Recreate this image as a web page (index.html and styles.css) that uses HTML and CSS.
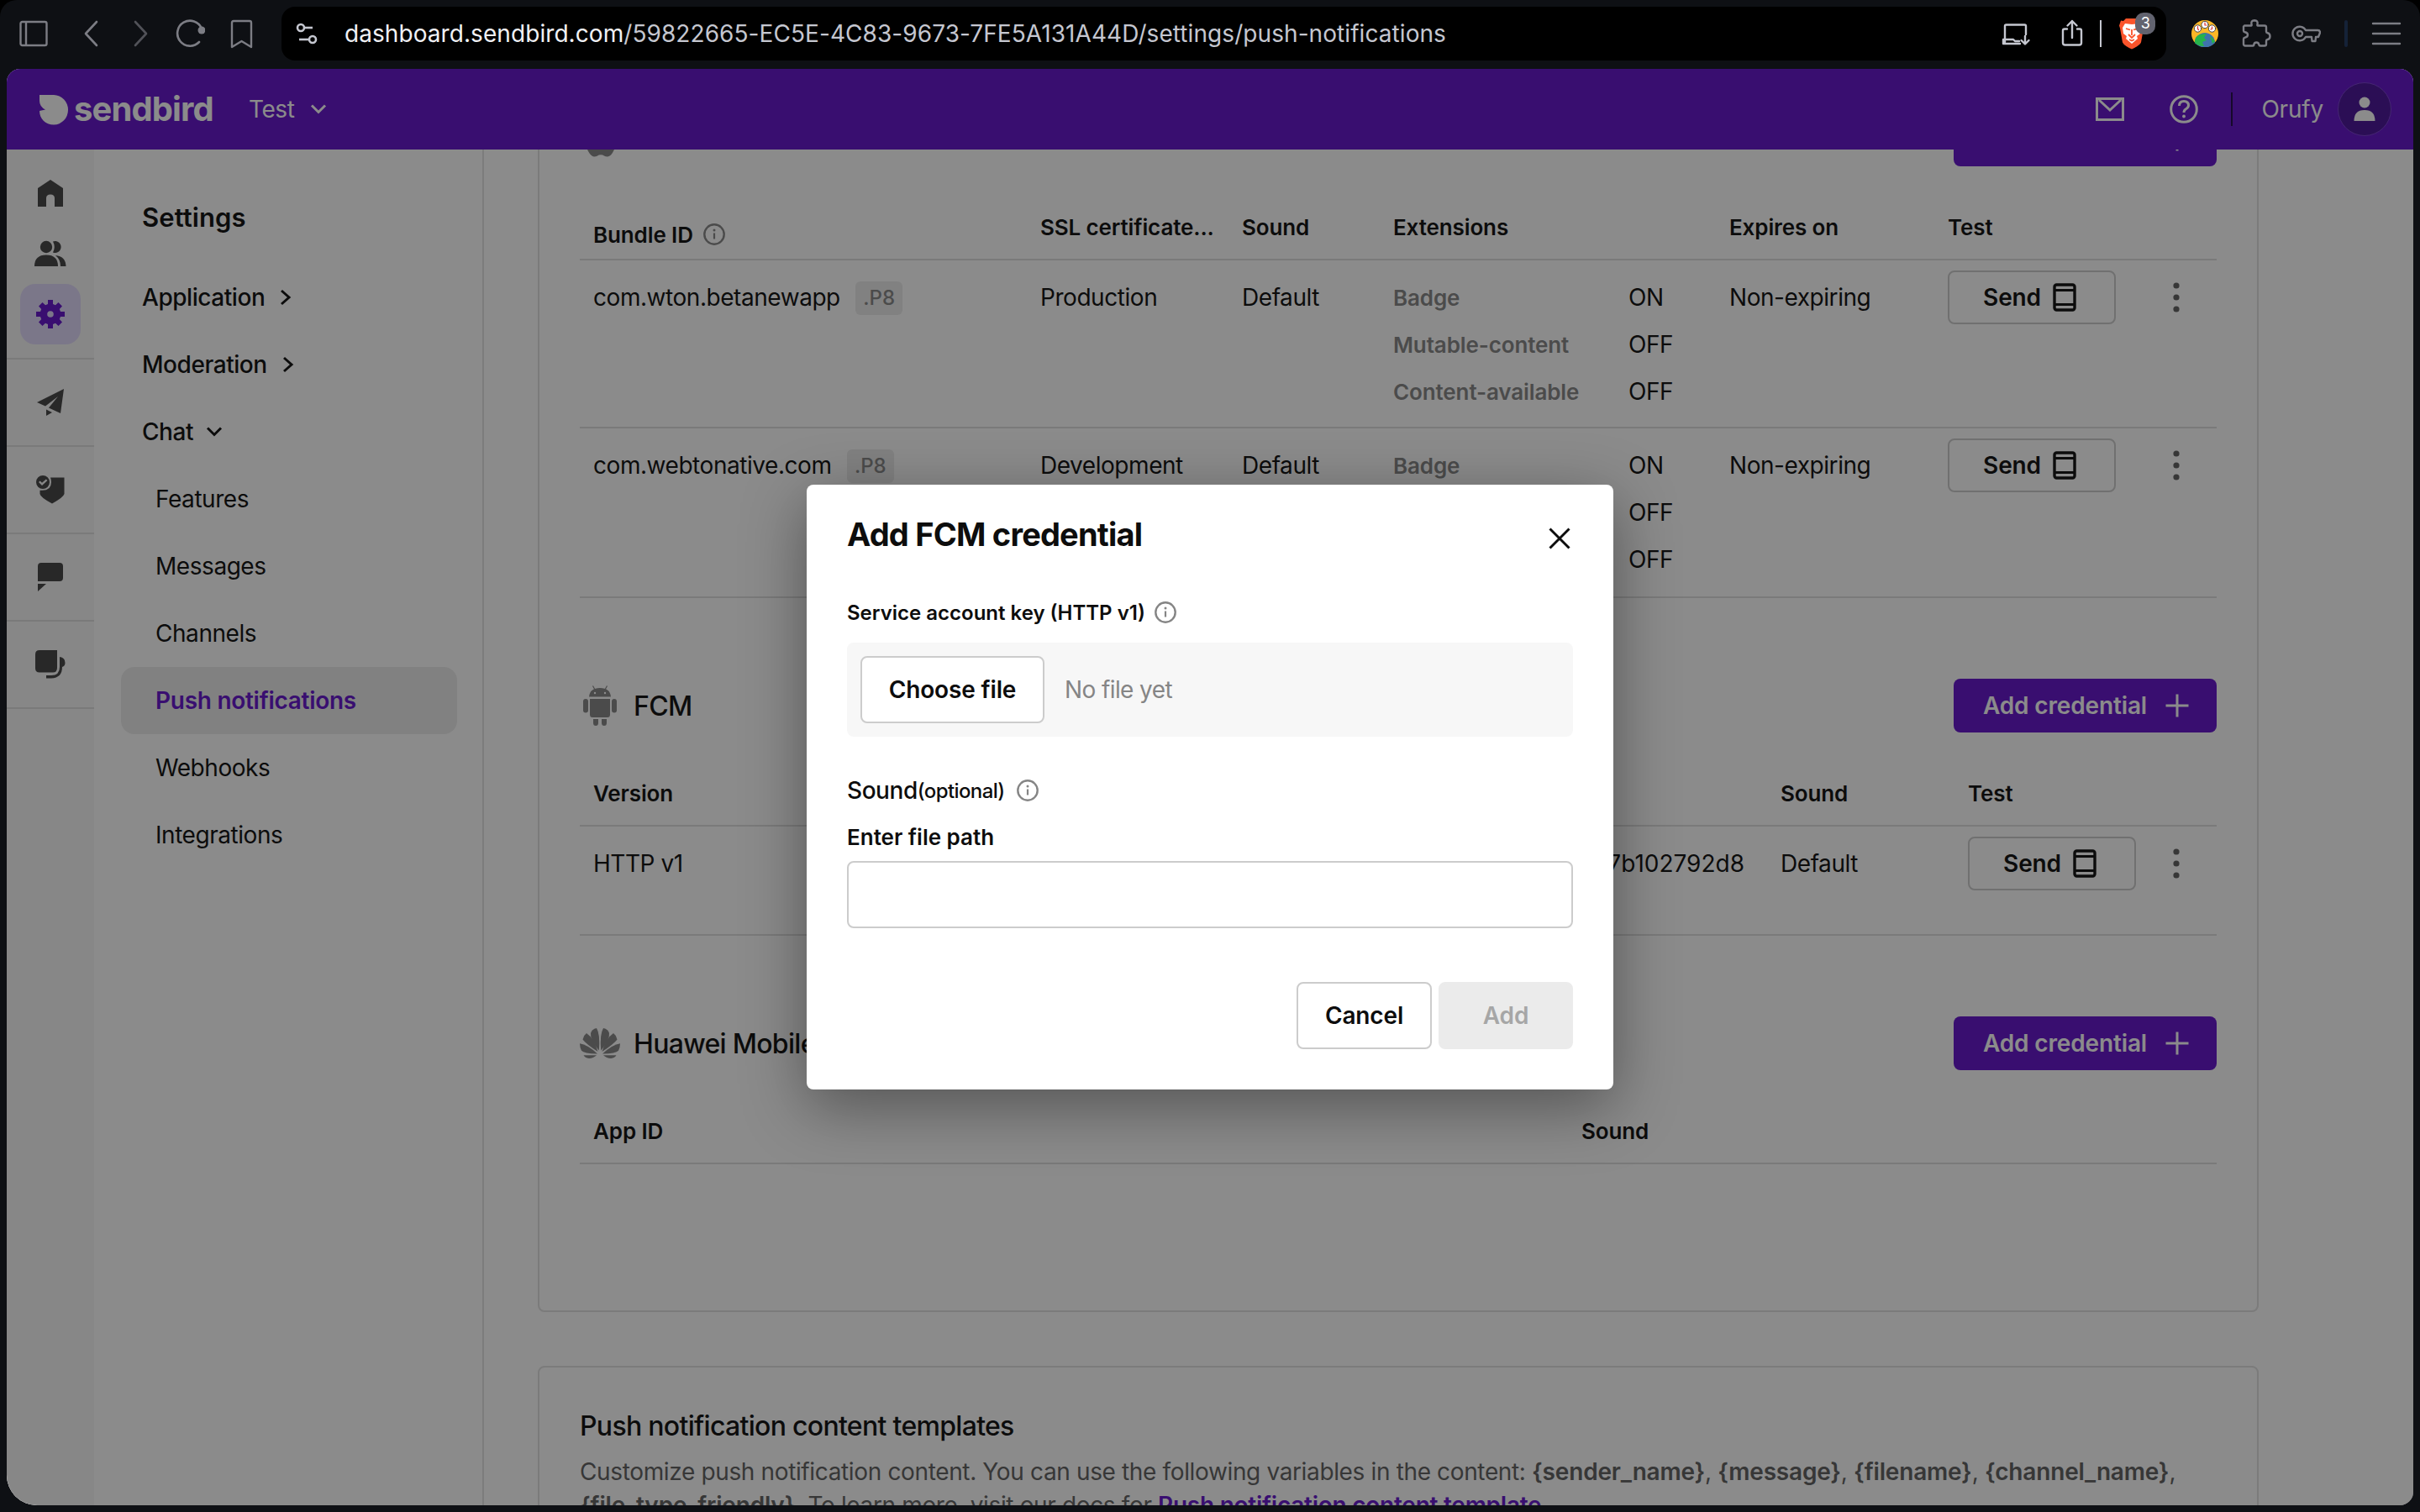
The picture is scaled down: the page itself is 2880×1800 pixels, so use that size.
FILE: index.html
```html
<!DOCTYPE html>
<html lang="en">
<head>
  <meta charset="UTF-8" />
  <title>Push notifications - Sendbird Dashboard</title>
  <link rel="stylesheet" href="styles.css">
</head>
<body>
  <svg class="defs" width="0" height="0">
    <symbol id="info" viewBox="0 0 26 26"><circle cx="13" cy="13" r="11.7" fill="none" stroke="currentColor" stroke-width="2.4"/><path d="M13 11.5v7" stroke="currentColor" stroke-width="2.2"/><circle cx="13" cy="8" r="1.5" fill="currentColor"/></symbol>
    <symbol id="phone" viewBox="0 0 28 34"><rect x="2" y="2" width="24" height="30" rx="2.5" fill="none" stroke="currentColor" stroke-width="3.4"/><path d="M2 8.5h24M2 25.500h24" stroke="currentColor" stroke-width="3"/></symbol>
    <symbol id="kebab" viewBox="0 0 8 36"><circle cx="4" cy="4" r="3.6"/><circle cx="4" cy="18" r="3.6"/><circle cx="4" cy="32" r="3.6"/></symbol>
    <symbol id="plus" viewBox="0 0 28 28"><path d="M14 0.500v27M0.500 14h27" stroke="currentColor" stroke-width="3"/></symbol>
    <symbol id="chev-right" viewBox="0 0 14 20"><path d="M2 2l9 8-9 8" fill="none" stroke="currentColor" stroke-width="3"/></symbol>
    <symbol id="chev-down" viewBox="0 0 20 14"><path d="M2 2.500l8 8 8-8" fill="none" stroke="currentColor" stroke-width="3"/></symbol>
  </svg>

  <div class="browser">
    <div class="toolbar">
      <div class="nav-icons">
        <svg width="36" height="36" viewBox="0 0 36 36"><rect x="2.500" y="4" width="31" height="28" rx="2"/><path d="M9 4.500v27"/></svg>
        <svg width="36" height="36" viewBox="0 0 36 36"><path d="M25 4L12 18l13 14" stroke-width="2.6"/></svg>
        <svg class="dim" width="36" height="36" viewBox="0 0 36 36"><path d="M11 4l13 14-13 14" stroke-width="2.6"/></svg>
        <svg width="36" height="36" viewBox="0 0 36 36"><path d="M29 28A15 15 0 1 1 32 12" stroke-width="2.6"/><circle cx="32" cy="14" r="4.500" fill="currentColor" stroke="none"/></svg>
        <svg width="36" height="36" viewBox="0 0 36 36"><path d="M7 5q0-2 2-2h19q2 0 2 2v29l-11.500-7L7 34z"/></svg>
      </div>
      <div class="urlbar">
        <svg class="site" width="32" height="28" viewBox="0 0 32 28"><g fill="none" stroke="currentColor" stroke-width="2.600"><circle cx="9" cy="7" r="4"/><path d="M13 7h10"/><circle cx="23" cy="21" r="4"/><path d="M19 21H7"/></g></svg>
        <div class="url"><b>dashboard.sendbird.com</b>/59822665-EC5E-4C83-9673-7FE5A131A44D/settings/push-notifications</div>
        <div class="url-icons">
          <svg width="36" height="36" viewBox="0 0 36 36"><path d="M5 28V9q0-1.500 1.500-1.500h22Q30 7.500 30 9v10M3 25h12l2 2h5M3 25v5h20M29 21v9M24.500 26l4.500 4.500 4.500-4.500"/></svg>
          <svg width="36" height="36" viewBox="0 0 36 36"><path d="M12 12.500H9q-2 0-2 2V29q0 2.500 2.500 2.500h17Q29 31.500 29 29V14.500q0-2-2-2h-3M18 23V3M12.500 8.500L18 3l5.500 5.500"/></svg>
          <span class="sep"></span>
          <div class="brave">
            <svg width="32" height="38" viewBox="0 0 32 38"><path d="M9 1h14l3 3 3-.500 2 6-1 3-3 17q-2 4-11 8-9-4-11-8L2 12.500l-1-3 2-6L6 4z" fill="#fb542b"/><path d="M8 7l8 1 8-1 3 5-1 7-4 3 1 3-7 6-7-6 1-3-4-3-1-7z" fill="#fff"/><path d="M9 13l5 1.500M23 13l-5 1.500M16 14v7M12 20l4 4 4-4M13 26l3 1.500 3-1.500" stroke="#fb542b" stroke-width="1.800" fill="none"/></svg>
            <span class="count">3</span>
          </div>
        </div>
      </div>
      <div class="ext-icons">
        <svg class="globe" width="32" height="32" viewBox="0 0 32 32"><circle cx="16" cy="16" r="16" fill="#fdb827"/><path d="M4 27a12 12 0 0 1 24 0A16 16 0 0 1 4 27z" fill="#3f73ad"/><path d="M4 27q-1-7 6-10l8-1-3 5 3 3-5 2 2 5Q8 31 4 27zM22 18l6 7-3 3z" fill="#26b34b"/><g fill="#fff" stroke="#444" stroke-width="1"><circle cx="7.500" cy="10" r="4.200"/><circle cx="16" cy="5.500" r="4.200"/><circle cx="24.500" cy="10" r="4.200"/></g><path d="M7.500 7.500v3l1 1M16 3v3h2M24.500 8v2.500l-1.500.500" stroke="#d33" stroke-width="1.200" fill="none"/></svg>
        <svg width="36" height="36" viewBox="0 0 36 36"><path d="M4 8.500h8q1 0 .500-1.500Q11.500 2.500 16 2.300q4.500.200 3.500 4.700-.500 1.500.500 1.500h8q2 0 2 2v5q0 1.500 1.500 1.700 3 .500 3 4 0 3.300-3 3.800-1.500.200-1.500 1.700v3.800q0 2-2 2h-5q-1.500 0-1.700-1.500-.500-2.500-3-2.500t-3 2.500Q15.500 32.500 14 32.500H5q-2 0-2-2v-6q0-1.500 1.500-1.700 3.500-.700 3.500-3.300t-3.500-3.300Q3 16 3 14.500v-5z"/></svg>
        <svg width="36" height="36" viewBox="0 0 36 36"><path d="M18 14a8.300 8.300 0 1 0 0 8h7l.500 5h4l.500-5h3l2-5q0-3-2.500-3z"/><circle cx="11" cy="18" r="3"/></svg>
        <span class="ext-sep"></span>
        <svg width="36" height="36" viewBox="0 0 36 36"><path d="M2 6h32M2 18h32M2 30h32"/></svg>
      </div>
    </div>

    <div class="page">
      <header class="topbar">
        <svg class="bird" width="36" height="37" viewBox="0 0 36 37"><path d="M1 1h17a17.500 17.500 0 0 1 17 18 17 17.500 0 0 1-17 17.500C8 36.500 1 29 1 20l7-1.500Q1 15 1 8z" fill="currentColor"/></svg>
        <span class="brand">sendbird</span>
        <span class="app">Test</span>
        <svg width="20" height="14"><use href="#chev-down"/></svg>
        <div class="account">
          <svg width="34" height="28" viewBox="0 0 34 28" fill="none" stroke="currentColor" stroke-width="3"><rect x="1.500" y="1.500" width="31" height="25"/><path d="M4 3l13 12L30 3"/></svg>
          <svg class="help" width="36" height="36" viewBox="0 0 36 36" fill="none" stroke="currentColor" stroke-width="3"><circle cx="18" cy="18" r="15.300"/><path d="M12.500 14q0-5.500 5.500-5.500t5.500 5q0 2.500-3 4.200-2.500 1.500-2.500 4.300"/><circle cx="18" cy="26.500" r="1.900" fill="currentColor" stroke="none"/></svg>
          <span class="line"></span>
          <span class="user">Orufy</span>
          <span class="avatar"><svg width="26" height="30" viewBox="0 0 26 30" fill="currentColor"><circle cx="13" cy="7" r="6.500"/><path d="M0.500 29q0-13 12.500-13t12.500 13z"/></svg></span>
        </div>
      </header>

      <div class="body">
        <nav class="rail">
          <div class="rail-top">
            <a><svg width="30" height="34" viewBox="0 0 30 34"><path d="M0 11L15 1l15 10v22H20V23q0-4.500-5-4.500T10 23v10H0z"/></svg></a>
            <a><svg width="38" height="32" viewBox="0 0 38 32"><circle cx="14" cy="8" r="7.200"/><path d="M0 31q0-13.500 14-13.500T28 31z"/><path d="M22 1.500a7 7 0 1 1 0 13q3.500-6.500 0-13zM25 18q12 1 12.500 13H31q0-8-6-13z"/></svg></a>
            <a class="on"><svg width="34" height="34" viewBox="0 0 34 34"><path fill-rule="evenodd" d="M14 0h6v5l3 1.200L26.500 3 31 7.500 27.800 11l1.200 3h5v6h-5l-1.200 3 3.200 3.500-4.500 4.500-3.500-3.200-3 1.200v5h-6v-5l-3-1.200L7.500 31 3 26.500 6.200 23 5 20H0v-6h5l1.200-3L3 7.500 7.500 3 11 6.200 14 5zM17 13.200a3.800 3.800 0 1 0 0 7.600 3.800 3.800 0 0 0 0-7.600z"/></svg></a>
          </div>
          <a class="cell"><svg width="32" height="32" viewBox="0 0 32 32"><path d="M0 16L32 0l-4 29-14-6.500L25 9 10 20.500zM11 24.500l7 3.500-7 4z"/></svg></a>
          <a class="cell"><svg width="34" height="34" viewBox="0 0 34 34"><path fill-rule="evenodd" d="M8 0a8 8 0 1 1 0 16A8 8 0 0 1 8 0zm-5 8l4 4 6.500-6-1.700-1.600L7 8.800 4.700 6.500z"/><path d="M17 2.500h16.500V22q-1 4-14.500 11.500Q5 26 4.500 22v-4.300Q18 19 18 8q0-3-1-5.500z"/></svg></a>
          <a class="cell"><svg width="30" height="34" viewBox="0 0 30 34"><path d="M4 0h22q4 0 4 4v14q0 4-4 4H0V4q0-4 4-4zM0 25h10l-10 9z"/></svg></a>
          <a class="cell"><svg width="36" height="34" viewBox="0 0 36 34"><path d="M5 0h21v21q0 5.500-5 5.500H5q-5 0-5-5V5q0-5 5-5zM29 8q6.500 1 6.500 7 0 4-3.500 5 0 13-13 13.500h-6V30h6q10 0 10-10z"/></svg></a>
        </nav>

        <aside class="sidebar">
          <h2>Settings</h2>
          <a class="group">Application <svg width="14" height="20"><use href="#chev-right"/></svg></a>
          <a class="group">Moderation <svg width="14" height="20"><use href="#chev-right"/></svg></a>
          <a class="group open">Chat <svg width="20" height="14"><use href="#chev-down"/></svg></a>
          <a>Features</a>
          <a>Messages</a>
          <a>Channels</a>
          <a class="active">Push notifications</a>
          <a>Webhooks</a>
          <a>Integrations</a>
        </aside>

        <main>
          <div class="card services">
            <section class="apns">
              <div class="section-head">
                <svg width="50" height="46" viewBox="4 0 44 40"><path d="M26 10c4-2 10-3 14 3-6 4-5 12 1 15-2 6-5 10-8 10-3 0-4-2-7-2s-4 2-7 2c-4 0-9-9-9-16 0-9 8-15 16-12z"/></svg>
                <h3>APNs</h3>
                <button class="add">Add credential <svg width="28" height="28"><use href="#plus"/></svg></button>
              </div>
              <div class="row thead">
                <span class="bundle">Bundle ID <svg class="info" width="26" height="26"><use href="#info"/></svg></span>
                <span>SSL certificate...</span><span>Sound</span><span>Extensions</span><span>Expires on</span><span>Test</span>
              </div>
              <div class="row">
                <span>com.wton.betanewapp <i class="tag">.P8</i></span>
                <span>Production</span>
                <span>Default</span>
                <dl><dt>Badge</dt><dd>ON</dd><dt>Mutable-content</dt><dd>OFF</dd><dt>Content-available</dt><dd>OFF</dd></dl>
                <span>Non-expiring</span>
                <div class="test"><button class="send">Send <svg width="28" height="34"><use href="#phone"/></svg></button><svg class="kebab" width="8" height="36"><use href="#kebab"/></svg></div>
              </div>
              <div class="row last">
                <span>com.webtonative.com <i class="tag">.P8</i></span>
                <span>Development</span>
                <span>Default</span>
                <dl><dt>Badge</dt><dd>ON</dd><dt>Mutable-content</dt><dd>OFF</dd><dt>Content-available</dt><dd>OFF</dd></dl>
                <span>Non-expiring</span>
                <div class="test"><button class="send">Send <svg width="28" height="34"><use href="#phone"/></svg></button><svg class="kebab" width="8" height="36"><use href="#kebab"/></svg></div>
              </div>
            </section>

            <section class="fcm">
              <div class="section-head">
                <svg width="48" height="48" viewBox="0 0 48 48"><path d="M11 13.500Q12 3 24 3t13 10.500zM12 16h24v18.500q0 3.500-3 3.500H15q-3 0-3-3.500zM16 40h6v4.500q0 3.500-3 3.500t-3-3.500zM26 40h6v4.500q0 3.500-3 3.500t-3-3.500z"/><rect x="4" y="16" width="6" height="16.500" rx="3"/><rect x="38" y="16" width="6" height="16.500" rx="3"/><path d="M18 5l-2.500-4.500M30 5l2.500-4.500" stroke="currentColor" stroke-width="1.200"/><circle cx="18" cy="9" r="1.200" fill="#fff"/><circle cx="30" cy="9" r="1.200" fill="#fff"/></svg>
                <h3>FCM</h3>
                <button class="add">Add credential <svg width="28" height="28"><use href="#plus"/></svg></button>
              </div>
              <div class="row thead"><span>Version</span><span></span><span>Sound</span><span>Test</span></div>
              <div class="row">
                <span>HTTP v1</span>
                <span class="key">7b102792d8</span>
                <span>Default</span>
                <div class="test"><button class="send">Send <svg width="28" height="34"><use href="#phone"/></svg></button><svg class="kebab" width="8" height="36"><use href="#kebab"/></svg></div>
              </div>
            </section>

            <section class="hms">
              <div class="section-head">
                <svg width="48" height="48" viewBox="0 0 48 48"><g transform="matrix(1 0 0 1.220 0 -5)"><g id="petals"><path d="M22.800 31Q12 20 13 14q1-4 7-5 4.500 6 2.800 22z"/><path d="M21.500 32Q7 24 3.500 20q1-4 4.500-6 9 5 13.500 18z"/><path d="M21 34Q5 34 2 31q-2-3-2-7 9 1 21 10z"/><path d="M20 35.500q-4 3-9 3-5-.500-6.500-3z"/></g><use href="#petals" transform="matrix(-1 0 0 1 48 0)"/></g></svg>
                <h3>Huawei Mobile Services</h3>
                <button class="add">Add credential <svg width="28" height="28"><use href="#plus"/></svg></button>
              </div>
              <div class="row thead"><span>App ID</span><span>Sound</span></div>
            </section>
          </div>

          <div class="card templates">
            <h3>Push notification content templates</h3>
            <p>Customize push notification content. You can use the following variables in the content: <b>{sender_name}</b>, <b>{message}</b>, <b>{filename}</b>, <b>{channel_name}</b>,<br><b>{file_type_friendly}</b>. To learn more, visit our docs for <a>Push notification content template</a>.</p>
          </div>
        </main>
      </div>

      <div class="scrim">
        <form class="modal">
          <div class="modal-head">
            <h1>Add FCM credential</h1>
            <svg width="26" height="26" viewBox="0 0 26 26"><path d="M1.500 1.500l23 23M24.500 1.500l-23 23" stroke="currentColor" stroke-width="3"/></svg>
          </div>
          <label class="key-label">Service account key (HTTP v1) <svg class="info" width="26" height="26"><use href="#info"/></svg></label>
          <div class="file">
            <button type="button" class="choose">Choose file</button>
            <span>No file yet</span>
          </div>
          <div class="sound">Sound<small>(optional)</small> <svg class="info" width="26" height="26"><use href="#info"/></svg></div>
          <label class="path-label">Enter file path</label>
          <input type="text">
          <div class="actions">
            <button type="button" class="cancel">Cancel</button>
            <button type="button" disabled>Add</button>
          </div>
        </form>
      </div>
    </div>
  </div>
</body>
</html>
```
FILE: styles.css
```css
* { box-sizing: border-box; }
body {
  margin: 0;
  background: #000;
  color: #0d0d0d;
  font-family: Inter, "Liberation Sans", sans-serif;
  font-size: 28px;
  letter-spacing: -0.45px;
}
h1, h2, h3, p, dl, dd { margin: 0; }
svg { flex: none; display: block; }
button { font-family: inherit; font-size: 28px; font-weight: 600; letter-spacing: -0.15px; color: inherit; padding: 0; }
.defs { position: absolute; }

/* browser window */
.browser {
  width: 2880px;
  height: 1800px;
  padding: 0 8px 8px;
  background: #0e1014;
  border-radius: 20px 20px 0 0;
  overflow: hidden;
}
.toolbar { height: 82px; margin: 0 -8px; padding: 8px 8px 10px 5px; display: flex; }
.nav-icons, .ext-icons, .url-icons { display: grid; align-items: center; justify-items: center; height: 64px; }
.nav-icons { grid-template-columns: 69px 68px 52px 64px 58px; width: 330px; }
.nav-icons svg, .ext-icons svg { color: #7c7d84; fill: none; stroke: currentColor; stroke-width: 2.4; stroke-linejoin: round; stroke-linecap: round; }
.nav-icons .dim { color: #515258; }
.ext-icons { grid-template-columns: 68px 54px 64px 32px 64px; margin-left: 12px; }
.ext-icons .globe { stroke: none; }
.ext-sep { width: 4px; height: 32px; background: #152238; border-radius: 2px; }
.urlbar { flex: 1; display: flex; align-items: center; height: 64px; background: #000; border-radius: 16px; padding: 0 5px 0 14px; color: #c5c7d0; }
.url { flex: 1; margin-left: 29px; font-size: 28px; letter-spacing: 0.07px; white-space: nowrap; }
.url b { font-weight: 400; color: #f1f1f5; }
.url-icons { grid-template-columns: 68px 66px 2px 72px; }
.url-icons > svg { fill: none; stroke: currentColor; stroke-width: 2.4; stroke-linejoin: round; stroke-linecap: round; }
.sep { width: 2px; height: 32px; background: #c5c7d0; }
.brave { position: relative; }
.count { position: absolute; left: 20px; top: -6px; width: 24px; height: 26px; border-radius: 10px; background: #62636f; color: #fff; font-size: 18px; line-height: 26px; text-align: center; }

/* dashboard */
.page { position: relative; height: 1710px; background: #fff; border-radius: 16px 16px 16px 36px; overflow: hidden; }
.topbar { height: 96px; padding: 0 26px 0 38px; display: flex; align-items: center; background: #6210cc; color: #fff; }
.brand { margin-left: 6px; width: 166px; font-size: 40px; font-weight: 700; letter-spacing: -0.9px; line-height: 40px; }
.app { margin: 0 19px 0 42px; }
.account { margin-left: auto; display: flex; align-items: center; }
.help { margin-left: 53px; }
.line { width: 2px; height: 40px; margin: 0 34px 0 38px; background: #200647; }
.user { margin-right: 17px; letter-spacing: -0.2px; }
.avatar { width: 64px; height: 64px; border: 1px solid #7a3dd0; border-radius: 50%; background: #471197; display: flex; align-items: center; justify-content: center; }

.body { display: flex; height: 1614px; }
.rail { width: 104px; background: #f7f7f7; color: #424242; fill: currentColor; }
.rail a { display: flex; align-items: center; justify-content: center; }
.rail-top { height: 250px; padding: 16px 16px 0; border-bottom: 2px solid #dfdfdf; }
.rail-top a { height: 72px; }
.rail-top a.on { border-radius: 18px; background: #e1d9fc; color: #6210cc; }
.rail .cell { height: 104px; border-bottom: 2px solid #dfdfdf; }

.sidebar { width: 464px; padding: 54px 30px 0 32px; border-right: 2px solid #e3e3e3; }
.sidebar h2 { padding-left: 25px; margin-bottom: 28px; line-height: 54px; font-size: 31px; font-weight: 600; letter-spacing: 0.1px; }
.sidebar a { display: flex; align-items: center; height: 80px; padding-left: 41px; border-radius: 16px; }
.sidebar .group { padding-left: 25px; font-weight: 500; gap: 18px; }
.sidebar .group.open { gap: 15px; }
.sidebar .active { background: #ebebeb; color: #6210cc; font-weight: 600; letter-spacing: -0.28px; }

main { flex: 1; padding-left: 64px; overflow: hidden; }
.card { width: 2048px; border: 2px solid #e0e0e0; border-radius: 8px; padding: 0 48px; }
.services { height: 1474px; margin: -90px 0 64px; padding-top: 44px; }
section { margin-bottom: 96px; }
.section-head { display: flex; align-items: center; height: 64px; fill: #858585; color: #858585; }
.section-head h3 { margin-left: 16px; color: #0d0d0d; }
h3 { font-size: 32px; font-weight: 500; letter-spacing: -0.7px; }
.add { margin-left: auto; width: 313px; height: 64px; border: 0; border-radius: 8px; background: #6210cc; color: #fff; display: flex; align-items: center; justify-content: center; gap: 22px; padding-left: 2px; }
.row { display: grid; border-bottom: 2px solid #dedede; padding-top: 12px; line-height: 65px; height: 200px; }
.apns .row { grid-template-columns: 532px 240px 180px 400px 260px 1fr; }
.apns .last { height: 202px; }
.fcm .row { grid-template-columns: 700px 713px 223px 1fr; height: 130px; }
.hms .row { grid-template-columns: 1176px 1fr; }
section .row.thead { height: 112px; padding-top: 40px; font-size: 26px; font-weight: 600; letter-spacing: -0.12px; }
.row > * { padding-left: 16px; white-space: nowrap; }
.bundle { display: flex; align-items: center; gap: 12px; margin-top: 9px; height: 64px; }
.info { color: #858585; }
.tag { display: inline-block; margin-left: 11px; padding: 0 9px; height: 40px; line-height: 40px; font-style: normal; font-size: 24px; font-weight: 500; letter-spacing: 0; background: #ebebeb; color: #858585; border-radius: 6px; vertical-align: 1px; }
dl { display: grid; grid-template-columns: 280px 1fr; grid-auto-rows: 56px; }
dt { font-size: 26px; font-weight: 600; letter-spacing: -0.12px; color: #858585; }
.test { display: flex; align-items: flex-start; }
.send { width: 200px; height: 64px; border: 2px solid #ccc; border-radius: 8px; background: #fff; display: flex; align-items: center; justify-content: center; gap: 14px; padding-right: 5px; }
.kebab { margin: 14px 44px 0 auto; fill: #5e5e5e; }
.key { text-align: right; padding-right: 27px; letter-spacing: 0; }
.templates { height: 400px; padding-top: 46px; }
.templates h3 { line-height: 48px; }
.templates p { margin-top: 10px; line-height: 40px; color: #5e5e5e; white-space: nowrap; letter-spacing: -0.36px; }
.templates b { font-weight: 600; letter-spacing: -0.18px; }
.templates a { color: #6210cc; font-weight: 600; letter-spacing: -0.25px; text-decoration: underline; }

/* dialog */
.scrim { position: absolute; inset: 0; display: flex; align-items: center; justify-content: center; background: rgba(13, 13, 13, 0.48); }
.modal { width: 960px; height: 720px; padding: 36px 48px 48px; background: #fff; border-radius: 8px; box-shadow: 0 20px 76px rgba(0, 0, 0, 0.4); }
.modal-head { display: flex; align-items: center; justify-content: space-between; height: 50px; padding-right: 3px; }
.modal-head svg { margin-top: 6px; }
h1 { margin-top: -5px; font-size: 38px; font-weight: 700; letter-spacing: -0.8px; }
.modal label { display: flex; align-items: center; letter-spacing: 0; }
.sound { display: flex; align-items: center; }
.modal .key-label { margin-top: 50px; height: 32px; font-size: 24px; font-weight: 600; gap: 11px; }
.file { margin-top: 20px; height: 112px; padding: 16px; display: flex; align-items: center; background: #f7f7f7; border-radius: 8px; color: #858585; letter-spacing: -0.6px; }
.choose { width: 219px; margin-right: 24px; }
.modal button { height: 80px; border: 2px solid #ccc; border-radius: 8px; background: #fff; color: #0d0d0d; }
.sound { height: 40px; margin-top: 44px; font-weight: 500; }
.sound small { font-size: 24px; margin-right: 14px; letter-spacing: -0.6px; }
.modal .path-label { height: 40px; margin-top: 15px; font-size: 26px; font-weight: 600; }
.modal input { display: block; width: 100%; height: 80px; margin-top: 9px; border: 2px solid #ccc; border-radius: 8px; background: #fff; }
.actions { display: flex; justify-content: flex-end; gap: 8px; margin-top: 64px; }
.actions button { width: 160px; }
.actions .cancel { width: 161px; }
.modal button:disabled { background: #ebebeb; border-color: #ebebeb; color: #a6a6a6; }
```
